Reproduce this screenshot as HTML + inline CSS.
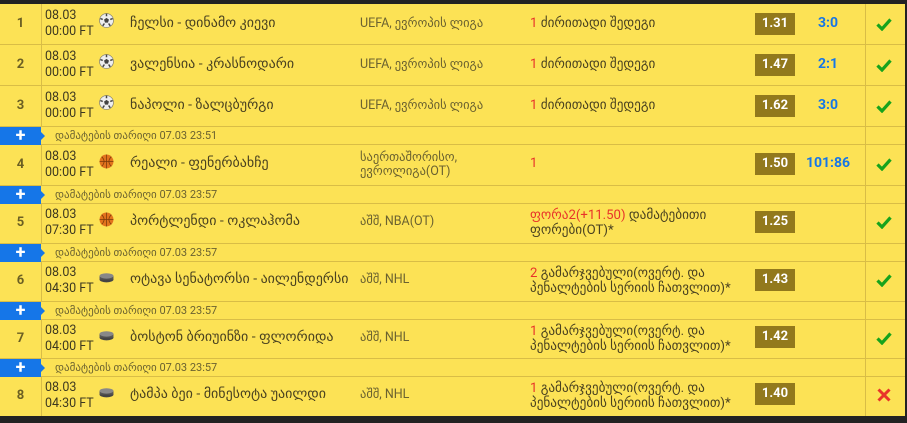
<!DOCTYPE html>
<html><head><meta charset="utf-8"><style>
*{margin:0;padding:0;box-sizing:border-box}
body{width:907px;height:423px;background:#222;position:relative;overflow:hidden;font-family:"Roboto","Liberation Sans","DejaVu Sans",sans-serif}
.tbl{position:absolute;left:0;top:4px;width:905px;height:412px;background:#fce255}
.r{position:absolute;left:0;width:905px;border-bottom:1px solid #d9bd46}
.vl{position:absolute;top:0;bottom:0;width:1px;background:#d9bd46}
.num{position:absolute;left:0;width:41px;text-align:center;font-size:13px;font-weight:bold;color:#6b5f23}
.dt{position:absolute;left:45px;font-size:12.5px;line-height:16px;color:#3d3820}
.ic{position:absolute;left:99px;width:15px;height:15px}
.m{position:absolute;left:130px;font-size:14px;color:#4a4220}
.lg{position:absolute;left:360px;font-size:12.5px;line-height:14px;color:#6b6230}
.bt{position:absolute;left:530px;font-size:13.2px;line-height:15px;color:#4a4220}
.red{color:#e8342a}
.od{position:absolute;left:755px;width:40px;height:22px;background:#92791c;color:#fff;font-weight:bold;font-size:13px;text-align:center;line-height:22px}
.sc{position:absolute;left:800px;width:56px;text-align:center;color:#1576e8;font-weight:bold;font-size:14px}
.ck{position:absolute;left:876px;width:16px;height:14px}
.add{position:absolute;left:0;width:905px;height:18px;border-bottom:1px solid #d9bd46}
.plus{position:absolute;left:0;top:0;width:41px;height:18px;background:#1576e8;color:#fff;font-weight:bold;font-size:18px;line-height:18px;text-align:center}
.plus:after{content:"";position:absolute;right:-4px;top:5px;border-left:4px solid #1576e8;border-top:4px solid transparent;border-bottom:4px solid transparent}
.at{position:absolute;left:55px;top:2px;font-size:11px;color:#6b6230}
</style></head><body>
<div class="tbl">
<div class="vl" style="left:865px"></div>
</div>
<div style="position:absolute;left:0;top:0;width:907px;height:423px">
<svg width="0" height="0" style="position:absolute"><defs>
<symbol id="ball" viewBox="0 0 14 14"><circle cx="7" cy="7" r="6.5" fill="#eee" stroke="#777" stroke-width=".6"/><polygon points="7,4.5 9.3,6.2 8.4,9 5.6,9 4.7,6.2" fill="#444"/><path d="M7 .5V3M12.8 5.2L10.5 6M10.5 12L9 9.8M3.5 12L5 9.8M1.2 5.2L3.5 6" stroke="#444" stroke-width="1.4"/></symbol>
<symbol id="bb" viewBox="0 0 14 14"><circle cx="7" cy="7" r="6.5" fill="#e2731d"/><path d="M7 .5V13.5M.5 7H13.5M2.5 2.5Q7 7 2.5 11.5M11.5 2.5Q7 7 11.5 11.5" stroke="#7a3a0a" stroke-width=".7" fill="none"/></symbol>
<symbol id="pk" viewBox="0 0 14 14"><ellipse cx="7" cy="9" rx="6.5" ry="2.5" fill="#444"/><rect x=".5" y="5.5" width="13" height="3.5" fill="#555"/><ellipse cx="7" cy="5.5" rx="6.5" ry="2.5" fill="#888"/></symbol>
<symbol id="ok" viewBox="0 0 16 14"><path d="M1.5 7.5L6 12L14.5 2.5" stroke="#17a31c" stroke-width="3.2" fill="none"/></symbol>
<symbol id="x" viewBox="0 0 16 14"><path d="M2.5 1.5L13.5 12.5M13.5 1.5L2.5 12.5" stroke="#e8342a" stroke-width="3" fill="none"/></symbol>
</defs></svg>

<div class="r" style="top:4px;height:41px"><div class="vl" style="left:41px"></div><div class="num" style="top:12px">1</div><div class="dt" style="top:4px">08.03<br>00:00 FT</div><svg class="ic" style="top:9px"><use href="#ball"/></svg><div class="m" style="top:11px">ჩელსი - დინამო კიევი</div><div class="lg" style="top:13px">UEFA, ევროპის ლიგა</div><div class="bt" style="top:12px"><span class="red">1</span> ძირითადი შედეგი</div><div class="od" style="top:9px">1.31</div><div class="sc" style="top:11px">3:0</div><svg class="ck" style="top:13px"><use href="#ok"/></svg></div>

<div class="r" style="top:45px;height:41px"><div class="vl" style="left:41px"></div><div class="num" style="top:12px">2</div><div class="dt" style="top:4px">08.03<br>00:00 FT</div><svg class="ic" style="top:9px"><use href="#ball"/></svg><div class="m" style="top:11px">ვალენსია - კრასნოდარი</div><div class="lg" style="top:13px">UEFA, ევროპის ლიგა</div><div class="bt" style="top:12px"><span class="red">1</span> ძირითადი შედეგი</div><div class="od" style="top:9px">1.47</div><div class="sc" style="top:11px">2:1</div><svg class="ck" style="top:13px"><use href="#ok"/></svg></div>

<div class="r" style="top:86px;height:41px"><div class="vl" style="left:41px"></div><div class="num" style="top:12px">3</div><div class="dt" style="top:4px">08.03<br>00:00 FT</div><svg class="ic" style="top:9px"><use href="#ball"/></svg><div class="m" style="top:11px">ნაპოლი - ზალცბურგი</div><div class="lg" style="top:13px">UEFA, ევროპის ლიგა</div><div class="bt" style="top:12px"><span class="red">1</span> ძირითადი შედეგი</div><div class="od" style="top:9px">1.62</div><div class="sc" style="top:11px">3:0</div><svg class="ck" style="top:13px"><use href="#ok"/></svg></div>

<div class="add" style="top:127px"><div class="plus">+</div><div class="at">დამატების თარიღი 07.03 23:51</div></div>

<div class="r" style="top:145px;height:41px"><div class="vl" style="left:41px"></div><div class="num" style="top:12px">4</div><div class="dt" style="top:4px">08.03<br>00:00 FT</div><svg class="ic" style="top:9px"><use href="#bb"/></svg><div class="m" style="top:10px">რეალი - ფენერბახჩე</div><div class="lg" style="top:6px">საერთაშორისო,<br>ევროლიგა(OT)</div><div class="bt" style="top:11px"><span class="red">1</span></div><div class="od" style="top:8px">1.50</div><div class="sc" style="top:10px">101:86</div><svg class="ck" style="top:12px"><use href="#ok"/></svg></div>

<div class="add" style="top:186px"><div class="plus">+</div><div class="at">დამატების თარიღი 07.03 23:57</div></div>

<div class="r" style="top:204px;height:40px"><div class="vl" style="left:41px"></div><div class="num" style="top:11px">5</div><div class="dt" style="top:3px">08.03<br>07:30 FT</div><svg class="ic" style="top:8px"><use href="#bb"/></svg><div class="m" style="top:9px">პორტლენდი - ოკლაჰომა</div><div class="lg" style="top:11px">აშშ, NBA(OT)</div><div class="bt" style="top:4px"><span class="red">ფორა2(+11.50)</span> დამატებითი<br>ფორები(OT)*</div><div class="od" style="top:7px">1.25</div><svg class="ck" style="top:11px"><use href="#ok"/></svg></div>

<div class="add" style="top:244px"><div class="plus">+</div><div class="at">დამატების თარიღი 07.03 23:57</div></div>

<div class="r" style="top:262px;height:40px"><div class="vl" style="left:41px"></div><div class="num" style="top:11px">6</div><div class="dt" style="top:3px">08.03<br>04:30 FT</div><svg class="ic" style="top:8px"><use href="#pk"/></svg><div class="m" style="top:9px">ოტავა სენატორსი - აილენდერსი</div><div class="lg" style="top:11px">აშშ, NHL</div><div class="bt" style="top:4px"><span class="red">2</span> გამარჯვებული(ოვერტ. და<br>პენალტების სერიის ჩათვლით)*</div><div class="od" style="top:7px">1.43</div><svg class="ck" style="top:11px"><use href="#ok"/></svg></div>

<div class="add" style="top:302px"><div class="plus">+</div><div class="at">დამატების თარიღი 07.03 23:57</div></div>

<div class="r" style="top:320px;height:39px"><div class="vl" style="left:41px"></div><div class="num" style="top:11px">7</div><div class="dt" style="top:3px">08.03<br>04:00 FT</div><svg class="ic" style="top:8px"><use href="#pk"/></svg><div class="m" style="top:9px">ბოსტონ ბრიუინზი - ფლორიდა</div><div class="lg" style="top:11px">აშშ, NHL</div><div class="bt" style="top:4px"><span class="red">1</span> გამარჯვებული(ოვერტ. და<br>პენალტების სერიის ჩათვლით)*</div><div class="od" style="top:6px">1.42</div><svg class="ck" style="top:11px"><use href="#ok"/></svg></div>

<div class="add" style="top:359px"><div class="plus">+</div><div class="at">დამატების თარიღი 07.03 23:57</div></div>

<div class="r" style="top:377px;height:39px;border-bottom:none"><div class="vl" style="left:41px"></div><div class="num" style="top:11px">8</div><div class="dt" style="top:3px">08.03<br>04:30 FT</div><svg class="ic" style="top:8px"><use href="#pk"/></svg><div class="m" style="top:9px">ტამპა ბეი - მინესოტა უაილდი</div><div class="lg" style="top:11px">აშშ, NHL</div><div class="bt" style="top:4px"><span class="red">1</span> გამარჯვებული(ოვერტ. და<br>პენალტების სერიის ჩათვლით)*</div><div class="od" style="top:6px">1.40</div><svg class="ck" style="top:11px"><use href="#x"/></svg></div>
</div>
</body></html>
